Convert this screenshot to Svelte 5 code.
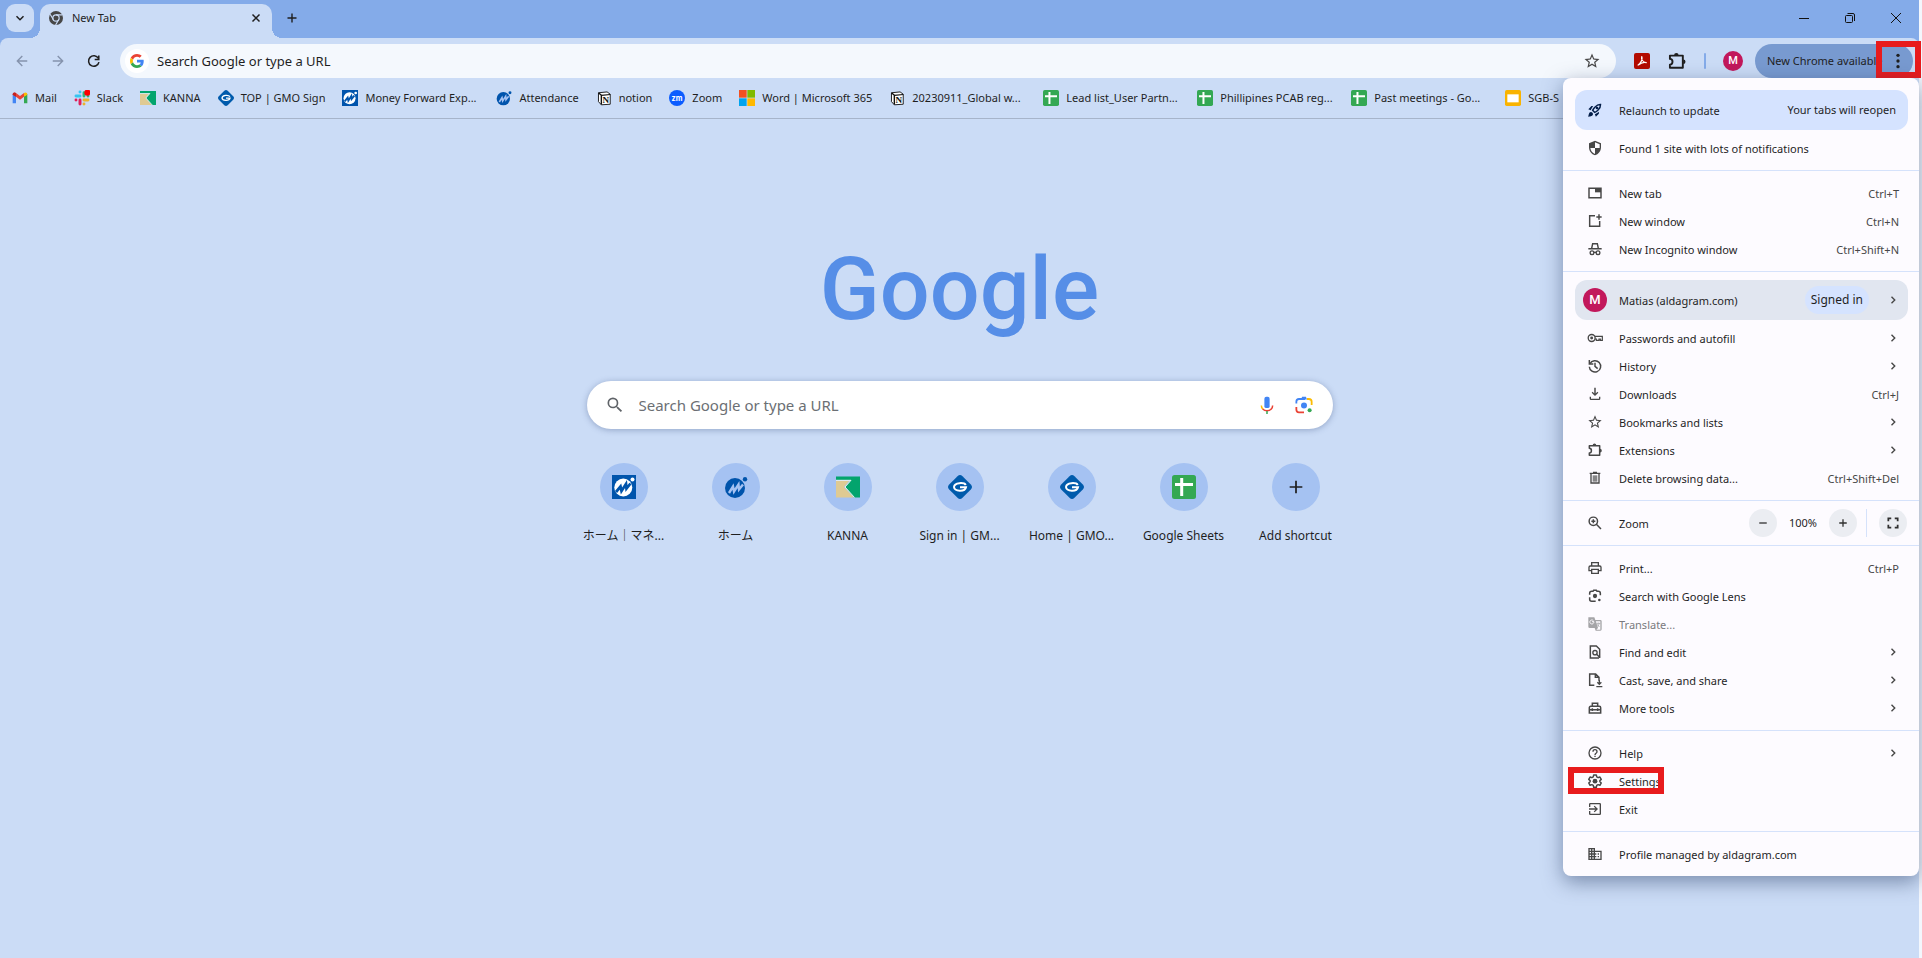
<script>
  const icons = {
    rocket: '<path d="M9.2 6.4C7.200 8.600 5.800 11.900 5.600 12.200L2 10.700l4-4.100c.5-.5 1.200-.7 1.900-.5zM17.700 14.800c-2.300 2-5.600 3.400-5.900 3.600l1.500 3.600 4.100-4c.5-.5.7-1.200.5-1.900zM9 18a3 3 0 0 1-.9 2.100C6.900 21.300 2 22 2 22s.7-4.900 1.900-6.100A3 3 0 0 1 9 18z"/><path d="M8.500 12.500s1.200-2.600 3.300-4.700c4-4 7.300-4.100 8.500-4 .1 1.200 0 4.500-4 8.500-2.100 2.100-4.700 3.300-4.700 3.300z" fill="none" stroke="currentColor" stroke-width="2.200"/><circle cx="15" cy="9" r="2"/>',
    shield: '<path d="M12 1 3 5v6c0 5.550 3.840 10.740 9 12 5.160-1.260 9-6.450 9-12V5zM12 3.200l7 3.100V12h-7zM12 12v8.900C8.280 19.800 5.500 16.100 5 12z" fill-rule="evenodd"/>',
    tab: '<path d="M3 5h18v14H3z" fill="none" stroke="currentColor" stroke-width="2.200"/><path d="M12 5h9v6h-9z"/>',
    window: '<path d="M12 4H4v16h15v-8" fill="none" stroke="currentColor" stroke-width="2.200"/><path d="M18 2v8M14 6h8" stroke="currentColor" stroke-width="2.200"/>',
    incognito: '<path d="M2 11.500h20M7 11l1.500-7h7L17 11" fill="none" stroke="currentColor" stroke-width="2.200"/><circle cx="7.500" cy="17.500" r="2.800" fill="none" stroke="currentColor" stroke-width="2"/><circle cx="16.500" cy="17.500" r="2.800" fill="none" stroke="currentColor" stroke-width="2"/><path d="M10 17h4" stroke="currentColor" stroke-width="2"/>',
    key: '<circle cx="7" cy="12" r="5.200" fill="none" stroke="currentColor" stroke-width="2"/><circle cx="7" cy="12" r="2.200"/><path d="M12 9.500h11v6h-3v-2h-2v2h-4v-2h-2" fill="none" stroke="currentColor" stroke-width="1.800"/>',
    history: '<path d="M4.500 8.500A8.500 8.500 0 1 1 3.500 13" fill="none" stroke="currentColor" stroke-width="2.200"/><path d="M3.500 3v6h6M12 7v5.500l4 3.500" fill="none" stroke="currentColor" stroke-width="2.200"/>',
    download: '<path d="M18 16v3H6v-3H4v3a2 2 0 0 0 2 2h12a2 2 0 0 0 2-2v-3zM17 10l-1.400-1.400-2.500 2.500V2.500h-2.200v8.600L8.400 8.600 7 10l5 5z"/>',
    star: '<path d="M22 9.240l-7.190-.62L12 2 9.190 8.630 2 9.240l5.460 4.730L5.820 21 12 17.270 18.180 21l-1.630-7.030zM12 15.400l-3.760 2.270 1-4.280-3.320-2.880 4.380-.38L12 6.100l1.710 4.040 4.380.38-3.320 2.880 1 4.280z"/>',
    puzzle: '<path d="M3.500 5.500H19V20H3.500v-3.500c4-.2 4.300-6.800 0-7z" fill="none" stroke="currentColor" stroke-width="2.300" stroke-linejoin="round"/><path d="M8.500 5a2.700 2.700 0 0 1 5.400 0zM19.500 10.300a2.700 2.700 0 0 1 0 5.400z"/>',
    trash: '<path d="M6 6v13.500h12V6M4 5h16M9 3.500h6" fill="none" stroke="currentColor" stroke-width="2"/><path d="M8.500 8h7v9.500h-7z" opacity=".65"/>',
    zoomin: '<circle cx="9.500" cy="9.500" r="6.300" fill="none" stroke="currentColor" stroke-width="2.200"/><path d="m14 14 7 7M6.500 9.500h6M9.500 6.500v6" stroke="currentColor" stroke-width="2.200"/>',
    search: '<path d="M15.500 14h-.79l-.28-.27A6.470 6.470 0 0 0 16 9.500 6.500 6.500 0 1 0 9.500 16c1.610 0 3.090-.59 4.230-1.570l.27.28v.79l5 4.990L20.490 19zM9.500 14a4.500 4.500 0 1 1 0-9 4.500 4.500 0 0 1 0 9z"/>',
    print: '<path fill-rule="evenodd" d="M19 8h-1V3H6v5H5a3 3 0 0 0-3 3v6h4v4h12v-4h4v-6a3 3 0 0 0-3-3zM8 5h8v3H8zm8 14H8v-4h8zm2-4v-2H6v2H4v-4a1 1 0 0 1 1-1h14a1 1 0 0 1 1 1v4z"/>',
    lens: '<path d="M4 10V8a3 3 0 0 1 3-3h2l1-1.500h4L15 5h2a3 3 0 0 1 3 3v3M4 14v3a3 3 0 0 0 3 3h6" fill="none" stroke="currentColor" stroke-width="2.300"/><circle cx="12" cy="12" r="3.200"/><circle cx="18.500" cy="18" r="1.900"/>',
    translate: '<path fill-rule="evenodd" d="M2 2h9l1.500 4H20a2 2 0 0 1 2 2v12a2 2 0 0 1-2 2h-7l-1.500-4H4a2 2 0 0 1-2-2zm11.200 6 3.300 10-2.500 2.500h6V8z"/><path d="M10.500 8.500H7.500M10.300 8.800a3 3 0 1 1-.8-1.900" fill="none" stroke="#fdfbff" stroke-width="1.400"/><path d="M14 11h6M17 10v1m1.500 0c-.5 2-1.500 3.500-3 4.500m0-3 3 4" stroke="currentColor" fill="none" stroke-width="1.200"/>',
    find: '<path d="M18 21H5V3h9l5 5v13" fill="none" stroke="currentColor" stroke-width="2.200"/><circle cx="12" cy="13" r="3.200" fill="none" stroke="currentColor" stroke-width="2"/><path d="m14 15 5 5" stroke="currentColor" stroke-width="2.200"/>',
    cast: '<path d="M11 20H4V3h9l5 5v5M12.500 3v5H18" fill="none" stroke="currentColor" stroke-width="2.200"/><path d="M18.500 12v6m-3-2.500 3 3 3-3M14 22h9" fill="none" stroke="currentColor" stroke-width="2"/>',
    tools: '<path d="M3.500 19.500v-8a2 2 0 0 1 2-2h13a2 2 0 0 1 2 2v8zM8 9V5h8v4M3 14.500h18M8 12.500v4M16 12.500v4" fill="none" stroke="currentColor" stroke-width="2.300"/>',
    help: '<path d="M11 18h2v-2h-2zM12 2a10 10 0 1 0 0 20 10 10 0 0 0 0-20zm0 18a8 8 0 1 1 0-16 8 8 0 0 1 0 16zm0-14a4 4 0 0 0-4 4h2a2 2 0 1 1 4 0c0 2-3 1.750-3 5h2c0-2.250 3-2.500 3-5a4 4 0 0 0-4-4z"/>',
    gear: '<path d="m10 3-.6 2.800-2.100 1.200-2.700-.9-2 3.500L4.700 11.500v1.500l-2.100 1.900 2 3.500 2.700-.9 2.100 1.200L10 21.500h4l.6-2.800 2.100-1.200 2.700.9 2-3.500-2.100-1.900v-1.500l2.100-1.900-2-3.500-2.700.9-2.100-1.200L14 3z" fill="none" stroke="currentColor" stroke-width="2.200" stroke-linejoin="round"/><circle cx="12" cy="12.200" r="3.600"/>',
    exit: '<path d="M10.100 15.600 11.500 17l5-5-5-5-1.400 1.400 2.600 2.600H3v2h9.700zM19 3H5a2 2 0 0 0-2 2v4h2V5h14v14H5v-4H3v4a2 2 0 0 0 2 2h14a2 2 0 0 0 2-2V5a2 2 0 0 0-2-2z"/>',
    domain: '<path d="M12 7V3H2v18h20V7zM6 19H4v-2h2zm0-4H4v-2h2zm0-4H4V9h2zm0-4H4V5h2zm4 12H8v-2h2zm0-4H8v-2h2zm0-4H8V9h2zm0-4H8V5h2zm10 12h-8v-2h2v-2h-2v-2h2v-2h-2V9h8zm-2-8h-2v2h2zm0 4h-2v2h2z"/>',
    chevron: '<path d="m9 5.500 6.500 6.500L9 18.500" fill="none" stroke="currentColor" stroke-width="2.800"/>',
    minus: '<path d="M4.500 12h15" stroke="currentColor" stroke-width="2.600"/>',
    plus: '<path d="M4.500 12h15M12 4.500v15" stroke="currentColor" stroke-width="2.600"/>',
    newtab: '<path d="M3 12h18M12 3v18" stroke="currentColor" stroke-width="2.800"/>',
    add: '<path d="M2.500 12h19M12 2.500v19" stroke="currentColor" stroke-width="2.600"/>',
    full: '<path d="M4 9V4h5M15 4h5v5M20 15v5h-5M9 20H4v-5" fill="none" stroke="currentColor" stroke-width="3"/>',
    back: '<path d="M21 12H4m8.500-8.500L4 12l8.500 8.500" fill="none" stroke="currentColor" stroke-width="2.400"/>',
    forward: '<path d="M3 12h17m-8.500-8.500L20 12l-8.500 8.500" fill="none" stroke="currentColor" stroke-width="2.400"/>',
    reload: '<path d="M19.500 7.500A9 9 0 1 0 20.500 14" fill="none" stroke="currentColor" stroke-width="2.600"/><path d="M20.200 2.500v7h-7" fill="none" stroke="currentColor" stroke-width="2.600"/>',
    dots: '<circle cx="12" cy="3.500" r="2.500"/><circle cx="12" cy="12" r="2.500"/><circle cx="12" cy="20.500" r="2.500"/>',
    down: '<path d="m5 8.500 7 7 7-7" fill="none" stroke="currentColor" stroke-width="3"/>',
    close: '<path d="m5 5 14 14M19 5 5 19" stroke="currentColor" stroke-width="3"/>',
    chrome: '<circle cx="12" cy="12" r="12" fill="#474747"/><circle cx="12" cy="12" r="5.400" fill="none" stroke="#cbdcf6" stroke-width="2"/><path d="M12 6.600h11M7.300 14.700 2 5.500M16.700 14.700 11.300 24" stroke="#cbdcf6" stroke-width="2"/>',
    google: '<g transform="scale(.5)"><path fill="#EA4335" d="M24 9.500c3.540 0 6.710 1.220 9.210 3.600l6.850-6.850C35.900 2.380 30.470 0 24 0 14.620 0 6.510 5.380 2.560 13.220l7.980 6.190C12.430 13.720 17.740 9.500 24 9.500z"/><path fill="#4285F4" d="M46.980 24.550c0-1.570-.15-3.090-.38-4.550H24v9.020h12.940c-.58 2.960-2.260 5.480-4.780 7.180l7.730 6c4.510-4.180 7.090-10.360 7.090-17.650z"/><path fill="#FBBC05" d="M10.530 28.590c-.48-1.450-.76-2.990-.76-4.590s.27-3.140.76-4.590l-7.980-6.190C.92 16.460 0 20.120 0 24s.92 7.540 2.560 10.780z"/><path fill="#34A853" d="M24 48c6.480 0 11.930-2.130 15.890-5.810l-7.730-6c-2.150 1.450-4.920 2.300-8.160 2.300-6.260 0-11.570-4.220-13.470-9.910l-7.980 6.190C6.510 42.620 14.620 48 24 48z"/></g>',
    gmail: '<path fill="#4285f4" d="M1 20V6l5 3.500V20z"/><path fill="#34a853" d="M23 20V6l-5 3.500V20z"/><path fill="#ea4335" d="M1 7c0-3.500 3-4 5-2.500l6 4.500 6-4.500v5.500l-6 4.800L6 10z"/><path fill="#c5221f" d="M1 7c0-3.500 3-4 5-2.500V10L1 7z"/><path fill="#fbbc04" d="M23 7c0-3.500-3-4-5-2.500V10z"/>',
    slack: '<g stroke-width="4.400" stroke-linecap="round"><path stroke="#36c5f0" d="M9 3v0M3 9h6"/><path stroke="#2eb67d" d="M15 4v5M21 9v0"/><path stroke="#ecb22e" d="M15 15h6M15 21v0"/><path stroke="#e01e5a" d="M9 15v6M3 15v0"/></g><circle cx="20" cy="4" r="4.600" fill="#f00"/>',
    kanna: '<path fill="#03a46d" d="M0 1.500h24v21h-6L9 12l6-7H0z"/><path fill="#dfca93" d="M0 6h13L8 12l9.500 10.500H0z"/><path fill="none" stroke="#eef4f0" stroke-width="1" d="M0 5.300h15L9 12l9.500 10.500"/>',
    gmo: '<path fill="#005bac" d="M9.500 1.200q2.500-2.400 5 0l8.300 8.300q2.400 2.500 0 5l-8.300 8.300q-2.500 2.400-5 0l-8.300-8.300q-2.400-2.500 0-5z"/><path d="M17.800 10C16 7.200 6.500 7.300 6 12c.5 4.700 11 5 12 .3h-6" fill="none" stroke="#fff" stroke-width="2"/>',
    mfbox: '<path fill="#0054ac" d="M0 0h24v24H0z"/><circle cx="11.300" cy="12.500" r="9" fill="#fff"/><path d="m4 17 4.500-5.500 1 4.500 4.500-7 .5 4.500 4-5" fill="none" stroke="#0054ac" stroke-width="2.800"/><circle cx="20.500" cy="4.500" r="2" fill="#fff"/>',
    mf: '<circle cx="11" cy="13" r="10" fill="#0054ac"/><path d="m5 18 4-6.500 1 5 4.500-7 .5 5 4-5" fill="none" stroke="#a5c2f2" stroke-width="2.400"/><circle cx="21" cy="4.200" r="2.200" fill="#0054ac"/>',
    notion: '<g transform="translate(2 2) scale(.86)"><path d="M2 2.500 17 1l5.500 4v17.500L7 23.500 2 18z" fill="#fff" stroke="#111" stroke-width="1.600"/><path d="M2 2.500 7 7v16" fill="none" stroke="#111" stroke-width="2.400"/><path d="m7 7 15.500-1.500" stroke="#111" stroke-width="2"/><text x="9" y="20.500" font-family="Liberation Serif, serif" font-weight="700" font-size="16" fill="#111">N</text></g>',
    zoom: '<circle cx="12" cy="12" r="12" fill="#0b5cff"/><text x="12" y="16" text-anchor="middle" font-family="Inter, sans-serif" font-weight="700" font-size="11" fill="#fff">zm</text>',
    ms: '<path fill="#f25022" d="M0 0h11.500v11.500H0z"/><path fill="#7fba00" d="M12.500 0H24v11.500H12.500z"/><path fill="#00a4ef" d="M0 12.500h11.500V24H0z"/><path fill="#ffb900" d="M12.500 12.500H24V24H12.500z"/>',
    sheets: '<rect width="24" height="24" rx="2.500" fill="#34a853"/><path d="M3 9.500h18M9.700 3v18" stroke="#fff" stroke-width="3"/>',
    slides: '<rect width="24" height="24" rx="2.500" fill="#f9b300"/><path fill="#fff" d="M3.500 6.500h17v12h-17z"/>',
    pdf: '<rect width="24" height="24" rx="3" fill="#b30b00"/><path d="M11.500 5c2 4-1 9.500-6 13.500M11.500 5c-1.500 5 3 9.500 7.500 9.500-4.500-1.500-9 .5-12.500 3.500" fill="none" stroke="#fff" stroke-width="1.700"/>',
    mic: '<rect x="8.500" y="1" width="7" height="15" rx="2.500" fill="#4285f4"/><path d="M4.500 12.500c0 2 .8 3.800 2 5" fill="none" stroke="#fbbc04" stroke-width="2"/><path d="M6.300 17.300c3 3.300 8.400 3.300 11.400 0 1.200-1.300 1.800-3 1.800-4.800" fill="none" stroke="#ea4335" stroke-width="2"/><path d="M12 20v4" stroke="#34a853" stroke-width="2"/>',
    lenscolor: '<path d="M1.800 10V7.500c0-2 1.500-3.500 3.500-3.500h8" fill="none" stroke="#4285f4" stroke-width="2.400"/><path d="M8 4.500 9.500 1h5L16 4.500z" fill="#4285f4"/><path d="M16 4h2.500c2 0 3.700 1.500 3.700 3.500V12" fill="none" stroke="#fbbc04" stroke-width="2.400"/><path d="M1.800 14.500V18c0 2 1.500 3.700 3.500 3.700H12" fill="none" stroke="#ea4335" stroke-width="2.400"/><circle cx="12" cy="12.500" r="4" fill="#4285f4"/><circle cx="19.500" cy="19" r="2.700" fill="#34a853"/>'
  };

  const bookmarks = [
    ['gmail', 'Mail'],
    ['slack', 'Slack'],
    ['kanna', 'KANNA'],
    ['gmo', 'TOP | GMO Sign'],
    ['mfbox', 'Money Forward Exp...', true],
    ['mf', 'Attendance'],
    ['notion', 'notion'],
    ['zoom', 'Zoom'],
    ['ms', 'Word | Microsoft 365'],
    ['notion', '20230911_Global w...', true],
    ['sheets', 'Lead list_User Partn...', true],
    ['sheets', 'Phillipines PCAB reg...', true],
    ['sheets', 'Past meetings - Go...', true],
    ['slides', 'SGB-S', true]
  ];

  const shortcuts = [
    ['mfbox', 'ホーム｜マネ...'],
    ['mf', 'ホーム'],
    ['kanna', 'KANNA'],
    ['gmo', 'Sign in | GM...'],
    ['gmo', 'Home | GMO...'],
    ['sheets', 'Google Sheets'],
    ['add', 'Add shortcut']
  ];

  const windows = [
    { icon: 'tab', label: 'New tab', keys: 'Ctrl+T' },
    { icon: 'window', label: 'New window', keys: 'Ctrl+N' },
    { icon: 'incognito', label: 'New Incognito window', keys: 'Ctrl+Shift+N' }
  ];
  const library = [
    { icon: 'key', label: 'Passwords and autofill', sub: true },
    { icon: 'history', label: 'History', sub: true },
    { icon: 'download', label: 'Downloads', keys: 'Ctrl+J' },
    { icon: 'star', label: 'Bookmarks and lists', sub: true },
    { icon: 'puzzle', label: 'Extensions', sub: true },
    { icon: 'trash', label: 'Delete browsing data...', keys: 'Ctrl+Shift+Del' }
  ];
  const page = [
    { icon: 'print', label: 'Print...', keys: 'Ctrl+P' },
    { icon: 'lens', label: 'Search with Google Lens' },
    { icon: 'translate', label: 'Translate...', disabled: true },
    { icon: 'find', label: 'Find and edit', sub: true },
    { icon: 'cast', label: 'Cast, save, and share', sub: true },
    { icon: 'tools', label: 'More tools', sub: true }
  ];
  const system = [
    { icon: 'help', label: 'Help', sub: true },
    { icon: 'gear', label: 'Settings', marked: true },
    { icon: 'exit', label: 'Exit' }
  ];
</script>

{#snippet icon(name, size = 's16')}
  <svg class="icon {size}" viewBox="0 0 24 24" fill="currentColor" aria-hidden="true">{@html icons[name]}</svg>
{/snippet}

{#snippet rows(list)}
  {#each list as item}
    <button class="item" disabled={item.disabled}>
      <span class="lead">{@render icon(item.icon)}</span>
      <span class="label">{item.label}</span>
      {#if item.keys}<span class="keys">{item.keys}</span>{/if}
      {#if item.sub}<span class="more">{@render icon('chevron', 's12')}</span>{/if}
      {#if item.marked}<span class="mark settings-mark"></span>{/if}
    </button>
  {/each}
{/snippet}

<div class="browser">
  <header class="tabstrip">
    <button class="tabsearch" aria-label="Search tabs">{@render icon('down', 's12')}</button>
    <div class="tab">
      {@render icon('chrome', 's14')}
      <span class="tabtitle">New Tab</span>
      <button class="plain small" aria-label="Close tab">{@render icon('close', 's12')}</button>
    </div>
    <button class="plain newtab" aria-label="New tab">{@render icon('newtab', 's12')}</button>
    <div class="controls">
      <button class="plain" aria-label="Minimize"><svg class="icon s12" viewBox="0 0 12 12"><path d="M1 6.500h10" stroke="#111" /></svg></button>
      <button class="plain" aria-label="Restore"><svg class="icon s12" viewBox="0 0 12 12" fill="none" stroke="#111"><rect x="1.500" y="3.500" width="7" height="7" rx="1" /><path d="M3.500 1.500H9a1.500 1.500 0 0 1 1.500 1.500v6" /></svg></button>
      <button class="plain" aria-label="Close"><svg class="icon s12" viewBox="0 0 12 12"><path d="m1 1 10 10M11 1 1 11" stroke="#111" /></svg></button>
    </div>
  </header>

  <div class="chrome">
    <div class="toolbar">
      <button class="plain nav faded" aria-label="Back">{@render icon('back', 's14')}</button>
      <button class="plain nav faded" aria-label="Forward">{@render icon('forward', 's14')}</button>
      <button class="plain nav" aria-label="Reload">{@render icon('reload', 's14')}</button>
      <div class="omnibox">
        <span class="gbadge">{@render icon('google', 's14')}</span>
        <input type="text" aria-label="Address and search bar" placeholder="Search Google or type a URL" />
        <button class="plain" aria-label="Bookmark this tab">{@render icon('star', 's18')}</button>
      </div>
      <div class="extensions">
        <button class="plain" aria-label="Adobe Acrobat">{@render icon('pdf')}</button>
        <button class="plain" aria-label="Extensions">{@render icon('puzzle', 's20')}</button>
        <span class="bar"></span>
        <button class="avatar" aria-label="Profile">M</button>
      </div>
      <button class="update">
        <span>New Chrome available</span>
        {@render icon('dots')}
        <span class="mark menu-mark"></span>
      </button>
    </div>
    <nav class="bookmarks" aria-label="Bookmarks">
      {#each bookmarks as [name, label, long]}
        <a href="#top" class:long>{@render icon(name)}<span>{label}</span></a>
      {/each}
    </nav>
  </div>

  <main>
    <h1>Google</h1>
    <div class="searchbox">
      {@render icon('search', 's20')}
      <input type="text" aria-label="Search" placeholder="Search Google or type a URL" />
      <button class="plain" aria-label="Search by voice">{@render icon('mic', 's18')}</button>
      <button class="plain" aria-label="Search by image">{@render icon('lenscolor', 's18')}</button>
    </div>
    <div class="shortcuts">
      {#each shortcuts as [name, label]}
        <a href="#top">
          <span class="disc">{@render icon(name, name === 'add' ? 's16' : 's24')}</span>
          <span>{label}</span>
        </a>
      {/each}
    </div>
  </main>

  <aside class="menu">
    <section>
      <button class="item card relaunch">
        <span class="lead">{@render icon('rocket')}</span>
        <span class="label">Relaunch to update</span>
        <span>Your tabs will reopen</span>
      </button>
      <button class="item">
        <span class="lead">{@render icon('shield')}</span>
        <span class="label">Found 1 site with lots of notifications</span>
      </button>
    </section>
    <section>{@render rows(windows)}</section>
    <section>
      <button class="item card profile">
        <span class="lead"><span class="face">M</span></span>
        <span class="label">Matias (aldagram.com)</span>
        <span class="pill">Signed in</span>
        <span class="more">{@render icon('chevron', 's12')}</span>
      </button>
      {@render rows(library)}
    </section>
    <section>
      <div class="item zoomrow">
        <span class="lead">{@render icon('zoomin')}</span>
        <span class="label">Zoom</span>
        <button class="round" aria-label="Zoom out">{@render icon('minus', 's12')}</button>
        <span class="percent">100%</span>
        <button class="round" aria-label="Zoom in">{@render icon('plus', 's12')}</button>
        <span class="split"></span>
        <button class="round" aria-label="Full screen">{@render icon('full', 's14')}</button>
      </div>
    </section>
    <section>{@render rows(page)}</section>
    <section>{@render rows(system)}</section>
    <section>
      <button class="item">
        <span class="lead">{@render icon('domain')}</span>
        <span class="label">Profile managed by aldagram.com</span>
      </button>
    </section>
  </aside>
</div>

<style>
  :global(body) {
    background: #f3f7fd;
  }
  .browser {
    position: relative;
    display: flex;
    flex-direction: column;
    min-height: 100vh;
    margin-right: 3px;
    background: #84abe9;
    color: #1f1f1f;
    font: 11px/16px "Noto Sans", "Noto Sans CJK JP", sans-serif;
  }
  button {
    margin: 0;
    padding: 0;
    border: 0;
    color: inherit;
    font: inherit;
  }
  a {
    color: inherit;
    text-decoration: none;
  }
  input {
    flex: 1;
    min-width: 0;
    height: 24px;
    padding: 0;
    border: 0;
    outline: 0;
    background: none;
    font: inherit;
    line-height: 24px;
  }
  .icon {
    display: block;
    flex: none;
  }
  .s12 { width: 12px; height: 12px; }
  .s14 { width: 14px; height: 14px; }
  .s16 { width: 16px; height: 16px; }
  .s18 { width: 18px; height: 18px; }
  .s20 { width: 20px; height: 20px; }
  .s24 { width: 24px; height: 24px; }
  .plain {
    display: grid;
    place-items: center;
    background: none;
  }

  .tabstrip {
    display: flex;
    height: 38px;
    padding-left: 6px;
  }
  .tabsearch {
    display: grid;
    place-items: center;
    width: 28px;
    height: 28px;
    margin-top: 4px;
    border-radius: 9px;
    background: #cbdcf6;
  }
  .tab {
    position: relative;
    display: flex;
    align-items: center;
    gap: 9px;
    box-sizing: border-box;
    width: 232px;
    margin: 4px 0 0 6px;
    padding: 0 8px 6px 9px;
    border-radius: 10px 10px 0 0;
    background: #cbdcf6;
  }
  .tab::before,
  .tab::after {
    content: "";
    position: absolute;
    bottom: 0;
    width: 10px;
    height: 10px;
  }
  .tab::before {
    right: 100%;
    background: radial-gradient(circle at 0 0, transparent 10px, #cbdcf6 10px);
  }
  .tab::after {
    left: 100%;
    background: radial-gradient(circle at 100% 0, transparent 10px, #cbdcf6 10px);
  }
  .tabtitle {
    flex: 1;
  }
  .small {
    width: 16px;
    height: 16px;
  }
  .newtab {
    width: 28px;
    height: 28px;
    margin: 4px 0 0 6px;
  }
  .controls {
    display: flex;
    margin-left: auto;
  }
  .controls .plain {
    width: 46px;
    height: 36px;
  }

  .chrome {
    border-bottom: 1px solid #a6b4ca;
    border-radius: 8px 8px 0 0;
    background: #cbdcf6;
  }
  .toolbar {
    display: flex;
    align-items: center;
    padding: 6px 6px 0 4px;
  }
  .nav {
    width: 36px;
    height: 34px;
  }
  .faded {
    color: #8593ad;
  }
  .omnibox {
    display: flex;
    flex: 1;
    align-items: center;
    gap: 8px;
    height: 34px;
    margin-left: 8px;
    padding: 0 15px 0 5px;
    border-radius: 17px;
    background: #f4f8fd;
    font-size: 13px;
  }
  .omnibox .plain {
    color: #474747;
  }
  .omnibox input::placeholder {
    color: #1f1f1f;
  }
  .gbadge {
    display: grid;
    place-items: center;
    width: 24px;
    height: 24px;
    border-radius: 12px;
    background: #fff;
  }
  .extensions {
    display: flex;
    align-items: center;
    gap: 17px;
    padding: 0 12px 0 18px;
  }
  .bar {
    width: 2px;
    height: 16px;
    border-radius: 1px;
    background: #84abe9;
  }
  .avatar,
  .face {
    display: grid;
    place-items: center;
    width: 20px;
    height: 20px;
    border-radius: 50%;
    background: #c2185b;
    color: #fff;
    font: 500 11px/20px Roboto, sans-serif;
  }
  .face {
    width: 24px;
    height: 24px;
    font-size: 13px;
  }
  .update {
    position: relative;
    display: flex;
    align-items: center;
    justify-content: space-between;
    width: 158px;
    height: 34px;
    padding: 0 7px 0 12px;
    border-radius: 17px;
    background: #789ad0;
    white-space: nowrap;
  }
  .mark {
    position: absolute;
    box-sizing: border-box;
    border: 6px solid #e81b1d;
  }
  .menu-mark {
    top: -3px;
    right: -8px;
    width: 45px;
    height: 37px;
  }
  .bookmarks {
    display: flex;
    gap: 16px;
    height: 40px;
    padding-left: 12px;
    overflow: hidden;
  }
  .bookmarks a {
    display: flex;
    flex: none;
    align-items: center;
    gap: 7px;
    padding-right: 1px;
    white-space: nowrap;
  }
  .bookmarks .long {
    width: 137px;
  }

  main {
    display: flex;
    flex: 1;
    flex-direction: column;
    align-items: center;
    background: #cbdcf6;
  }
  h1 {
    margin: 114px 0 0;
    color: #568ee7;
    font: 500 88px/112px Roboto, sans-serif;
  }
  .searchbox {
    display: flex;
    align-items: center;
    gap: 14px;
    box-sizing: border-box;
    width: 746px;
    max-width: 90%;
    height: 48px;
    margin-top: 36px;
    padding: 0 20px 0 18px;
    border-radius: 24px;
    background: #fff;
    box-shadow: 0 1px 6px rgba(60, 80, 130, 0.4);
    color: #5f6368;
    font-size: 15px;
  }
  .searchbox .plain {
    margin-left: 5px;
  }
  .searchbox input::placeholder {
    color: #6b6f74;
  }
  .shortcuts {
    display: flex;
    margin-top: 34px;
  }
  .shortcuts a {
    display: flex;
    flex-direction: column;
    align-items: center;
    gap: 17px;
    width: 112px;
    font-size: 12px;
  }
  .disc {
    display: grid;
    place-items: center;
    width: 48px;
    height: 48px;
    border-radius: 50%;
    background: #a5c2f2;
  }

  .menu {
    position: absolute;
    top: 78px;
    right: 0;
    width: 356px;
    padding-top: 4px;
    border-radius: 8px;
    background: #fdfbff;
    box-shadow: 0 6px 20px rgba(40, 60, 100, 0.5);
  }
  .menu section {
    padding: 8px 0;
  }
  .menu section + section {
    border-top: 1px solid #d5e2fb;
  }
  .item {
    position: relative;
    display: flex;
    align-items: center;
    box-sizing: border-box;
    width: 100%;
    height: 28px;
    padding: 0 20px;
    background: none;
    text-align: left;
  }
  .item:disabled {
    color: #7a7a7e;
  }
  .item:disabled .lead {
    color: #a5a5a8;
  }
  .lead {
    display: grid;
    place-items: center;
    width: 24px;
    margin-right: 12px;
    color: #474747;
  }
  .label {
    flex: 1;
  }
  .label,
  .keys {
    padding-top: 2px;
  }
  .keys,
  .more {
    color: #474747;
  }
  .card {
    width: auto;
    min-width: calc(100% - 23px);
    height: 40px;
    margin: 0 11px 4px 12px;
    padding: 0 12px 0 8px;
    border-radius: 12px;
  }
  .relaunch {
    background: #d5e3ff;
  }
  .relaunch .lead {
    color: #041e49;
  }
  .profile {
    padding-right: 9px;
    background: #e1e6f0;
  }
  .pill {
    margin-right: 18px;
    padding: 6px;
    border-radius: 14px;
    background: #d5e3ff;
    font-size: 12px;
  }
  .zoomrow {
    padding-right: 12px;
  }
  .round {
    display: grid;
    place-items: center;
    width: 28px;
    height: 28px;
    border-radius: 50%;
    background: #ebedf2;
    color: #303030;
  }
  .percent {
    width: 52px;
    text-align: center;
  }
  .split {
    width: 1px;
    height: 28px;
    margin: 0 12px 0 9px;
    background: #d5e2fb;
  }
  .settings-mark {
    top: 0;
    left: 5px;
    width: 96px;
    height: 27px;
  }
</style>
